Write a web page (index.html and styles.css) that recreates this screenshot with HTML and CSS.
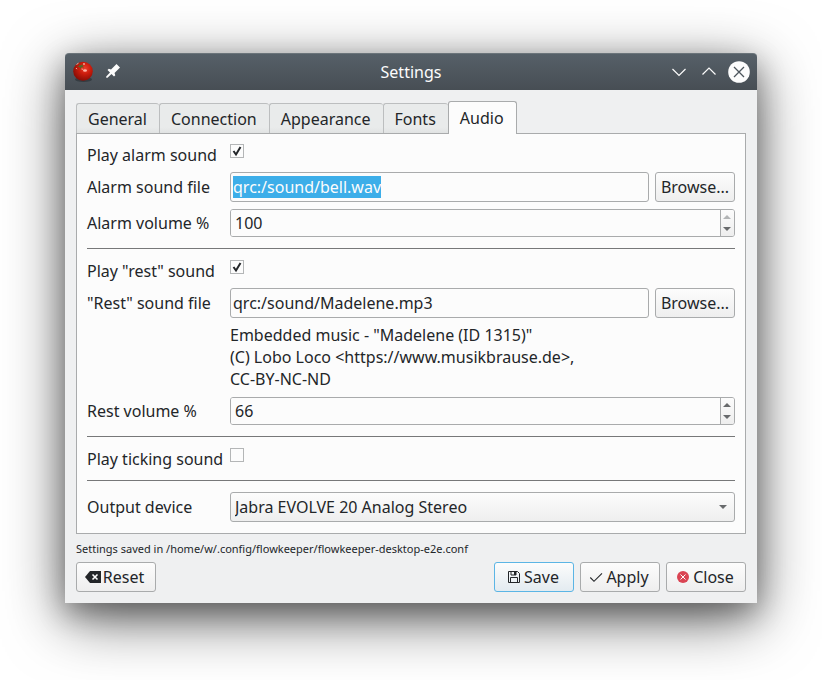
FILE: index.html
```html
<!DOCTYPE html>
<html lang="en">
<head>
<meta charset="utf-8">
<title>Settings</title>
<link rel="stylesheet" href="styles.css">
</head>
<body>
<main class="window">
  <header class="titlebar">
    <div class="titlebar-side">
      <button class="tool" type="button" aria-label="Window menu">
        <svg viewBox="0 0 22 22" width="22" height="22">
          <defs>
            <radialGradient id="skin" cx="0.6" cy="0.35" r="0.65">
              <stop offset="0" stop-color="#e8402c"/>
              <stop offset="0.45" stop-color="#cc1c0c"/>
              <stop offset="1" stop-color="#8a0d05"/>
            </radialGradient>
          </defs>
          <ellipse cx="11.5" cy="18.500" rx="8.500" ry="2.500" fill="#20262a" opacity="0.5"/>
          <ellipse cx="11" cy="10.300" rx="9.800" ry="9.500" fill="url(#skin)"/>
          <path d="M4.500 5.500l3-.5-.5-2 2 1.500 2-1.500-.5 2 1.500 1.500-2.500-.5-1 2-1-2z" fill="#4d6b2c"/>
          <path d="M4.500 3.500l2-1.300M4 7l1 1.200M9.500 8l1.500.3" stroke="#e9b7a4" stroke-width="1"/>
          <ellipse cx="13" cy="9.500" rx="2" ry="1.300" fill="#ffb3a6"/>
          <circle cx="12" cy="3" r="1" fill="#f7a193"/>
        </svg>
      </button>
      <button class="tool" type="button" aria-label="Keep on all desktops">
        <svg viewBox="0 0 22 22" width="22" height="22" fill="#fcfcfc">
          <path d="M14.500 3l3.500 3.500-5.500 5.500.8 2.200-1.300 1.300-2.500-2.500-4 3.800H4.200v-1.300L8 11.500 5.500 9l1.300-1.300L9 8.500z"/>
        </svg>
      </button>
    </div>
    <h1 class="title">Settings</h1>
    <div class="titlebar-side titlebar-end">
      <button class="tool" type="button" aria-label="Minimize">
        <svg viewBox="0 0 22 22" width="22" height="22" fill="none" stroke="#fcfcfc" stroke-width="1.200"><path d="M4.500 8l6.500 6.500 6.500-6.500"/></svg>
      </button>
      <button class="tool" type="button" aria-label="Maximize">
        <svg viewBox="0 0 22 22" width="22" height="22" fill="none" stroke="#fcfcfc" stroke-width="1.200"><path d="M4.500 13.500l6.500-6.500 6.500 6.500"/></svg>
      </button>
      <button class="tool" type="button" aria-label="Close window">
        <svg viewBox="0 0 22 22" width="22" height="22"><circle cx="11" cy="11" r="10.800" fill="#fcfcfc"/><path d="M6 6l10 10M16 6L6 16" stroke="#4d555c" stroke-width="1.300"/></svg>
      </button>
    </div>
  </header>

  <form class="content">
    <div class="tabs" role="tablist">
      <button class="tab" type="button" role="tab">General</button>
      <button class="tab" type="button" role="tab">Connection</button>
      <button class="tab" type="button" role="tab">Appearance</button>
      <button class="tab" type="button" role="tab">Fonts</button>
      <button class="tab tab-active" type="button" role="tab" aria-selected="true">Audio</button>
    </div>

    <section class="pane" role="tabpanel" aria-label="Audio">
      <label for="alarm-on">Play alarm sound</label>
      <input class="check" id="alarm-on" type="checkbox" checked>

      <label for="alarm-file">Alarm sound file</label>
      <div class="file">
        <input class="field" id="alarm-file" type="text" value="qrc:/sound/bell.wav" spellcheck="false">
        <button class="button" type="button">Browse...</button>
      </div>

      <label for="alarm-volume">Alarm volume %</label>
      <div class="spin">
        <input class="spin-value" id="alarm-volume" type="number" min="0" max="100" value="100">
        <div class="spin-steps">
          <button class="step" type="button" aria-label="Increase alarm volume" disabled><svg viewBox="0 0 8 4" width="8" height="4"><path d="M0 4l4-4 4 4z"/></svg></button>
          <button class="step" type="button" aria-label="Decrease alarm volume"><svg viewBox="0 0 8 4" width="8" height="4"><path d="M0 0l4 4 4-4z"/></svg></button>
        </div>
      </div>

      <hr class="rule">

      <label for="rest-on">Play "rest" sound</label>
      <input class="check" id="rest-on" type="checkbox" checked>

      <label for="rest-file">"Rest" sound file</label>
      <div class="file">
        <input class="field" id="rest-file" type="text" value="qrc:/sound/Madelene.mp3" spellcheck="false">
        <button class="button" type="button">Browse...</button>
      </div>

      <p class="credit">Embedded music - "Madelene (ID 1315)"<br>(C) Lobo Loco &lt;https://www.musikbrause.de&gt;,<br>CC-BY-NC-ND</p>

      <label for="rest-volume">Rest volume %</label>
      <div class="spin">
        <input class="spin-value" id="rest-volume" type="number" min="0" max="100" value="66">
        <div class="spin-steps">
          <button class="step" type="button" aria-label="Increase rest volume"><svg viewBox="0 0 8 4" width="8" height="4"><path d="M0 4l4-4 4 4z"/></svg></button>
          <button class="step" type="button" aria-label="Decrease rest volume"><svg viewBox="0 0 8 4" width="8" height="4"><path d="M0 0l4 4 4-4z"/></svg></button>
        </div>
      </div>

      <hr class="rule">

      <label for="tick-on">Play ticking sound</label>
      <input class="check" id="tick-on" type="checkbox">

      <hr class="rule">

      <label for="device">Output device</label>
      <div class="combo">
        <select class="combo-value" id="device"><option>Jabra EVOLVE 20 Analog Stereo</option></select>
        <svg class="combo-arrow" viewBox="0 0 8 4" width="8" height="4"><path d="M0 0l4 4 4-4z"/></svg>
      </div>
    </section>

    <p class="status">Settings saved in /home/w/.config/flowkeeper/flowkeeper-desktop-e2e.conf</p>

    <footer class="actions">
      <button class="button button-icon button-reset" type="reset">
        <svg viewBox="0 0 16 16" width="16" height="16"><path d="M0 8l5-6h11v12H5z" fill="#232629"/><path d="M7.500 5.500l5 5M12.500 5.500l-5 5" stroke="#fcfcfc" stroke-width="1.600"/></svg>Reset</button>
      <button class="button button-icon button-default" type="button">
        <svg viewBox="0 0 16 16" width="16" height="16" fill="none" stroke="#232629"><path d="M2.500 2.500h9l2 2v9h-11z"/><path d="M4.500 13V8.500h7V13"/><path d="M5 2.500v3.500h5V2.500"/><path d="M8 3h2v3H8z" fill="#232629" stroke="none"/></svg>Save</button>
      <button class="button button-icon" type="button">
        <svg viewBox="0 0 16 16" width="16" height="16" fill="none" stroke="#232629" stroke-width="1.100"><path d="M2.300 8.500l3.700 3.800 8-8"/></svg>Apply</button>
      <button class="button button-icon" type="button">
        <svg viewBox="0 0 16 16" width="16" height="16"><circle cx="8" cy="8" r="6" fill="#da4453"/><path d="M5.500 5.500l5 5M10.500 5.500l-5 5" stroke="#fcfcfc"/></svg>Close</button>
    </footer>
  </form>
</main>
<script src="script.js"></script>
</body>
</html>
```
FILE: script.js
```js
// Start with the first file name ready to be replaced.
document.getElementById("alarm-file").select();
```
FILE: styles.css
```css
* {
  box-sizing: border-box;
}

body {
  min-height: 100vh;
  margin: 0;
  padding: 53px 65px;
  background: #fff;
  color: #232629;
  font: 16px/22px "Noto Sans", "Open Sans", sans-serif;
}

button,
input,
select {
  margin: 0;
  color: inherit;
  font: inherit;
  outline: none;
}

svg {
  flex: none;
}

.window {
  border-radius: 4px 4px 0 0;
  background: #eff0f1;
  box-shadow: 0 16px 60px rgba(0, 0, 0, 0.6), 0 10px 28px rgba(0, 0, 0, 0.3);
}

.titlebar {
  display: flex;
  align-items: center;
  height: 37px;
  padding: 0 7px;
  border-top: 1px solid #6b747a;
  border-radius: 4px 4px 0 0;
  background: linear-gradient(#566068, #474e54);
  color: #fcfcfc;
}

.titlebar-side {
  display: flex;
  flex: 1;
  gap: 8px;
}

.titlebar-end {
  justify-content: flex-end;
}

.title {
  margin: 0;
  font-size: 16px;
  font-weight: 400;
}

.tool {
  display: flex;
  padding: 0;
  border: 0;
  background: none;
}

.content {
  padding: 11px;
}

.tabs {
  display: flex;
  align-items: flex-end;
}

.tab {
  height: 30px;
  padding: 0 12px 0 11px;
  border: 1px solid #bcbebf;
  border-right: 0;
  border-bottom: 0;
  border-radius: 3px 3px 0 0;
  background: linear-gradient(#e9ebeb 80%, #e1e3e3);
}

.tab-active {
  z-index: 1;
  height: 33px;
  margin-bottom: -1px;
  padding-bottom: 1px;
  border-right: 1px solid;
  border-color: #a9abac;
  background: #fcfcfc;
}

.pane {
  display: grid;
  grid-template-columns: 137px 1fr;
  gap: 6px;
  align-items: center;
  padding: 10px 10px 11px;
  border: 1px solid #a9abac;
  background: #fcfcfc;
}

.check {
  appearance: none;
  align-self: start;
  width: 14px;
  height: 14px;
  border: 1px solid #b4b6b7;
  background: #fcfcfc;
}

.check:checked {
  background: #fcfcfc url("data:image/svg+xml,%3Csvg xmlns='http://www.w3.org/2000/svg' viewBox='0 0 12 12'%3E%3Cpath d='M2.500 6l2.500 3.500L9.500 2' fill='none' stroke='%23232629' stroke-width='2'/%3E%3C/svg%3E");
}

.file {
  display: flex;
  gap: 6px;
}

.field {
  flex: 1;
  min-width: 0;
  height: 30px;
  padding: 0 2px;
  border: 1px solid #a9abac;
  border-radius: 3px;
  background: #fcfcfc;
}

.field::selection {
  background: #3daee9;
  color: #fcfcfc;
}

.button {
  display: flex;
  align-items: center;
  justify-content: center;
  gap: 2px;
  width: 80px;
  height: 30px;
  padding: 0;
  border: 1px solid #a9abac;
  border-radius: 3px;
  background: linear-gradient(#fcfcfc, #eeeeee);
}

.button-icon {
  padding-right: 3px;
}

.button-default {
  border-color: #5bb5e5;
  background: linear-gradient(#fcfcfc, #e3ebf0);
}

.button-reset {
  margin-right: auto;
}

.spin {
  display: flex;
  height: 28px;
  margin: 1px 0;
  overflow: hidden;
  border: 1px solid #a9abac;
  border-radius: 3px;
}

.spin-value {
  appearance: textfield;
  flex: 1;
  min-width: 0;
  padding: 0 4px;
  border: 0;
  background: #fcfcfc;
}

.spin-value::-webkit-inner-spin-button {
  appearance: none;
}

.spin-steps {
  display: flex;
  flex-direction: column;
  justify-content: center;
  width: 14px;
  padding-right: 1px;
  border-left: 1px solid #a9abac;
  background: linear-gradient(#fcfcfc, #eeeeee);
}

.step {
  display: flex;
  align-items: center;
  justify-content: center;
  height: 12px;
  padding: 0;
  border: 0;
  background: none;
  fill: #686a6c;
}

.step:disabled {
  fill: #b2b4b5;
}

.rule {
  grid-column: 1 / -1;
  width: 100%;
  height: 1px;
  margin: 4px 0 5px;
  border: 0;
  background: #777879;
}

.credit {
  grid-column: 2;
  margin: 0;
}

.combo {
  display: grid;
  align-items: center;
}

.combo-value,
.combo-arrow {
  grid-area: 1 / 1;
}

.combo-value {
  appearance: none;
  width: 100%;
  height: 30px;
  padding: 0 24px 0 4px;
  border: 1px solid #a9abac;
  border-radius: 3px;
  background: linear-gradient(#fcfcfc, #eeeeee);
}

.combo-arrow {
  justify-self: end;
  margin-right: 8px;
  fill: #686a6c;
  pointer-events: none;
}

.status {
  margin: 7px 0 5px;
  font-size: 11px;
  line-height: 16px;
}

.actions {
  display: flex;
  flex-wrap: wrap;
  gap: 6px;
}
```
